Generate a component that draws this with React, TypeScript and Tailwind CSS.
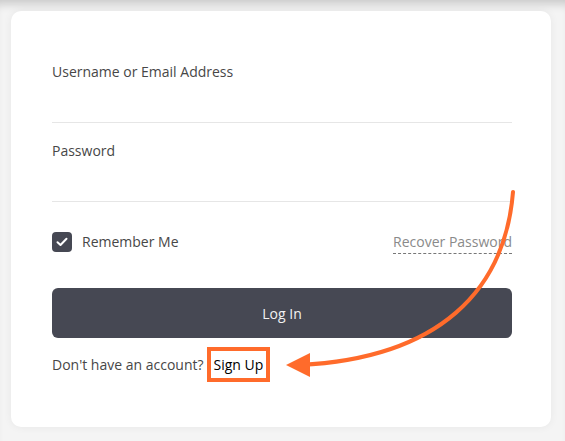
import React from "react";

export default function App() {
  return (
    <div
      className="relative w-[565px] h-[441px] overflow-hidden bg-[#f4f4f4] pt-[11px] pl-[11px] pr-[14px] shadow-[inset_0_10px_10px_-6px_rgba(0,0,0,0.18)]"
      style={{ fontFamily: '"Open Sans", "Liberation Sans", sans-serif' }}
    >
      <div className="h-[416px] rounded-[10px] bg-white shadow-[0_0_8px_rgba(0,0,0,0.06)] pl-[41px] pr-[39px] pt-[51px] text-[14px] text-[#474747]">
        <div className="flex flex-col">
          <label className="leading-[20px]">Username or Email Address</label>
          <div className="h-[41px] border-b border-[#e6e6e6]" />
          <label className="mt-[18px] leading-[20px]">Password</label>
          <div className="h-[41px] border-b border-[#e6e6e6]" />
        </div>
        <div className="mt-[30px] flex items-center justify-between h-[20px]">
          <div className="flex items-center gap-[10px]">
            <span className="flex h-[20px] w-[20px] items-center justify-center rounded-[4px] bg-[#464853]">
              <svg width="12" height="10" viewBox="0 0 12 10" fill="none">
                <path d="M1.5 5.2 L4.5 8 L10.5 1.8" stroke="white" strokeWidth="2" strokeLinecap="round" strokeLinejoin="round" />
              </svg>
            </span>
            <span className="leading-[20px]">Remember Me</span>
          </div>
          <span className="relative top-[1px] leading-[20px] text-[#8a8a8a] border-b border-dashed border-[#777] pb-[1px]">
            Recover Password
          </span>
        </div>
        <button className="mt-[36px] flex h-[50px] w-full items-center justify-center rounded-[6px] bg-[#464853] text-[14px] text-[#f2f2f2]">
          Log In
        </button>
        <div className="mt-[9px] flex items-center h-[35px]">
          <span className="leading-[20px]">Don't have an account?</span>
          <span className="ml-[3px] flex h-[35px] items-center border-[4px] border-[#ff6b2b] px-[3px] text-black leading-[20px]">
            Sign Up
          </span>
        </div>
      </div>
      <svg className="pointer-events-none absolute left-0 top-0" width="565" height="441" viewBox="0 0 565 441">
        <path d="M513 192 C505 290 440 358 300 365" fill="none" stroke="#ff6b2b" strokeWidth="4" strokeLinecap="round" />
        <polygon points="286,365 310,353 310,377" fill="#ff6b2b" />
      </svg>
    </div>
  );
}
